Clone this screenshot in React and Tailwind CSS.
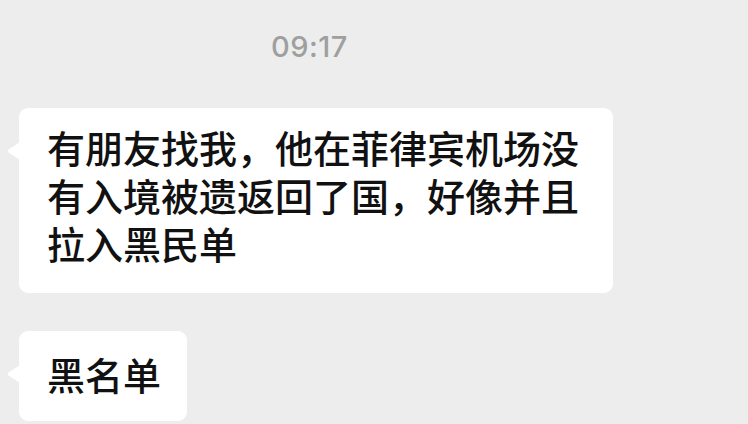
import React from 'react';

const cjk = { fontFamily: '"Noto Sans CJK SC", "Noto Sans", sans-serif' };

const Tail = () => (
  <svg className="absolute left-[-12px] top-[34px]" width="13" height="18" viewBox="0 0 13 18">
    <path d="M13 0 L1.6 7.6 Q0 9 1.6 10.4 L13 18 Z" fill="#ffffff" />
  </svg>
);

const Bubble = ({ className, children }) => (
  <div className={`relative bg-white rounded-[9px] ${className}`}>
    <Tail />
    {children}
  </div>
);

export default function App() {
  return (
    <div className="w-[748px] h-[424px] overflow-hidden bg-[#ededed] flex flex-col" style={cjk}>
      {/* timestamp */}
      <div className="pt-[27px] pl-[271px] h-[108px]">
        <span className="text-[29px] leading-[40px] text-[#9f9f9f] font-medium font-[Inter,sans-serif] tracking-[0.5px]">09:17</span>
      </div>

      <div className="pl-[19px] flex flex-col gap-[38px] items-start">
        <Bubble className="w-[594px] pt-[15px] pb-[26px] pl-[28px]">
          <p className="text-[38px] leading-[48px] font-medium text-[#111111] whitespace-nowrap">
            有朋友找我，他在菲律宾机场没
            <br />
            有入境被遗返回了国，好像并且
            <br />
            拉入黑民单
          </p>
        </Bubble>

        <Bubble className="w-[168px] h-[90px] pt-[19px] pl-[28px]">
          <p className="text-[38px] leading-[48px] font-medium text-[#111111] whitespace-nowrap">黑名单</p>
        </Bubble>
      </div>
    </div>
  );
}
